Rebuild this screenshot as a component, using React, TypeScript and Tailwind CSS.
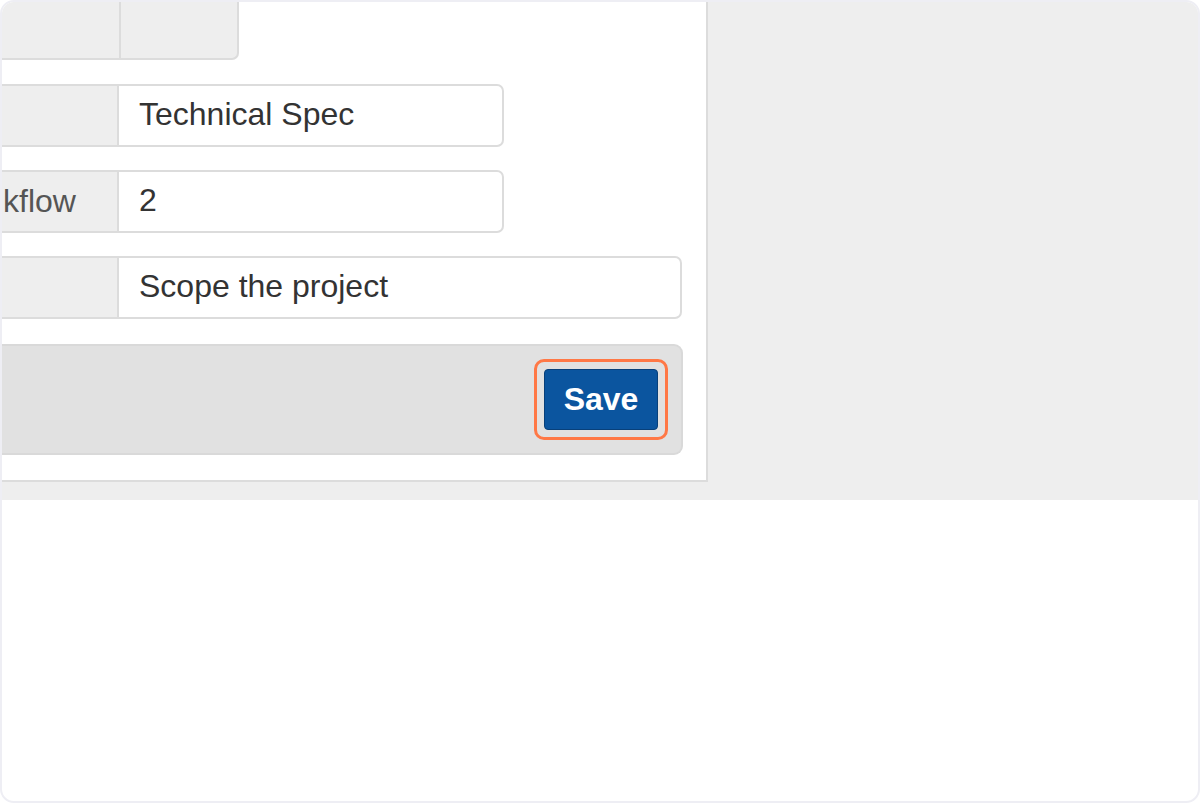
const App = () => {
  return (
    <div className="w-[1200px] h-[803px] overflow-hidden rounded-[14px] border-2 border-[#eeeef4] bg-white font-['Liberation_Sans',Arial,sans-serif]">
      <div className="h-[498px] bg-[#eeeeee]">
        <div className="w-[706px] h-[480px] bg-white border-r-2 border-b-2 border-[#dcdcdc] flex flex-col">
          <div className="flex h-[58px]">
            <div className="w-[117px] bg-[#eeeeee] border-b-2 border-[#dcdcdc]" />
            <div className="w-[120px] bg-[#eeeeee] border-l-2 border-b-2 border-r-2 border-[#dcdcdc] rounded-br-[7px]" />
          </div>
          <div className="mt-[24px] flex flex-col gap-[23px]">
            <Row label="" value="Technical Spec" width="w-[385px]" />
            <Row label="kflow" value="2" width="w-[385px]" />
            <Row label="" value="Scope the project" width="w-[563px]" />
          </div>
          <div className="mt-[25px] w-[681px] h-[111px] bg-[#e1e1e1] border-2 border-l-0 border-[#d9d9d9] rounded-r-[9px] flex items-center justify-end pr-[13px]">
            <div className="border-[3px] border-[#ff7846] rounded-[10px] p-[7px]">
              <button className="w-[114px] h-[61px] bg-[#0b559f] border border-[#08407a] rounded-[4px] text-white text-[32px] font-bold flex items-center justify-center pb-[2px]">
                Save
              </button>
            </div>
          </div>
        </div>
      </div>
    </div>
  );
};

const Row = ({ label, value, width }: { label: string; value: string; width: string }) => {
  return (
    <div className="flex h-[63px]">
      <div className="w-[117px] bg-[#eeeeee] border-2 border-l-0 border-[#dcdcdc] flex items-center pl-[1px] pb-[2px] text-[32px] text-[#555555] whitespace-nowrap">
        {label}
      </div>
      <div className={`${width} bg-white border-2 border-l-0 border-[#dcdcdc] rounded-r-[7px] flex items-center pl-[20px] pb-[4px] text-[32px] text-[#333333] whitespace-nowrap`}>
        {value}
      </div>
    </div>
  );
};

export default App;
